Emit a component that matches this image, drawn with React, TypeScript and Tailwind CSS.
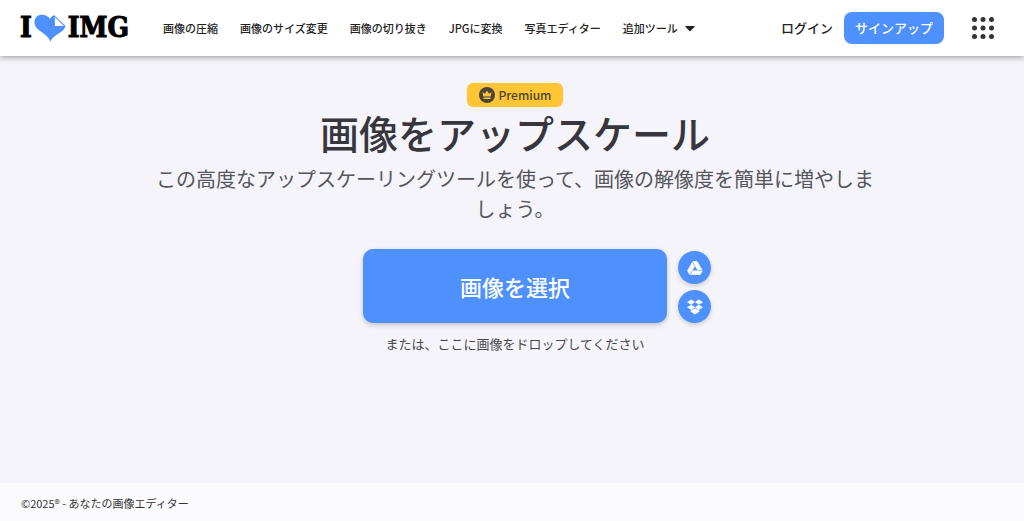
import { FaCaretDown } from "react-icons/fa";

type NavItem = {
  label: string;
  href: string;
};

const navItems: NavItem[] = [
  { label: "画像の圧縮", href: "#compress" },
  { label: "画像のサイズ変更", href: "#resize" },
  { label: "画像の切り抜き", href: "#crop" },
  { label: "JPGに変換", href: "#convert" },
  { label: "写真エディター", href: "#editor" },
];

const Logo = () => {
  return (
    <a
      href="#home"
      aria-label="I love IMG"
      className="flex items-center font-['DejaVu_Serif_Condensed','DejaVu_Serif',serif] text-[28px] leading-8 font-bold text-black [-webkit-text-stroke:1px_black]"
    >
      <span>I</span>
      <svg viewBox="0 0 32 28" className="mx-0.5 h-7 w-8" aria-hidden="true">
        <path
          d="M16.500 27.500C15 23.500 11 20.500 6 17C1.500 13.800 .3 10.500 .5 7.500C.8 3.500 4 .8 8 .8C11.500 .8 14.500 2.500 16 5C17 3 18.500 1.500 20 1.200L31.500 12C30.500 16.500 26 18.500 22.500 21C19.500 23 17.500 25 16.500 27.500Z"
          fill="#4d90fe"
        />
        <path d="M20.300 2L31 12.500H20.300Z" fill="#fff" stroke="#4d90fe" strokeWidth="1" strokeLinejoin="round" />
      </svg>
      <span>IMG</span>
    </a>
  );
};

const Header = () => {
  return (
    <header className="relative flex h-14 items-center bg-white pr-[30px] pl-5 shadow-[0_1px_6px_rgba(0,0,0,0.4)]">
      <Logo />
      <nav className="ml-[34px] flex items-center gap-[22px] text-[11px] font-medium whitespace-nowrap text-[#222]">
        {navItems.map((item) => (
          <a key={item.href} href={item.href} className="hover:text-[#4d90fe]">
            {item.label}
          </a>
        ))}
        <button className="flex items-center gap-1 hover:text-[#4d90fe]">
          追加ツール
          <FaCaretDown className="size-4" />
        </button>
      </nav>
      <div className="ml-auto flex items-center text-[13px] font-medium whitespace-nowrap">
        <a href="#login" className="text-[#222]">
          ログイン
        </a>
        <a
          href="#signup"
          className="ml-[11px] flex h-8 items-center rounded-lg bg-[#4d90fe] px-[11px] text-white"
        >
          サインアップ
        </a>
        <button aria-label="メニュー" className="ml-7">
          <svg viewBox="0 0 22 22" className="size-[22px]" fill="#333338">
            {[2.5, 11, 19.5].map((y) =>
              [2.5, 11, 19.5].map((x) => <circle key={`${x}-${y}`} cx={x} cy={y} r="2.500" />)
            )}
          </svg>
        </button>
      </div>
    </header>
  );
};

const PremiumBadge = () => {
  return (
    <div className="flex h-6 items-center gap-1 rounded-md bg-[#ffc532] px-3 text-[12px] font-medium text-[#4a4637]">
      <svg viewBox="0 0 16 16" className="size-4" aria-hidden="true">
        <circle cx="8" cy="8" r="8" fill="#48443a" />
        <path d="M3.500 5L6 6.800L8 3.500L10 6.800L12.500 5L11.700 9.500H4.300Z" fill="#ffc532" />
        <path d="M4.500 10.500H11.500V12H4.500Z" fill="#ffc532" />
      </svg>
      Premium
    </div>
  );
};

const DriveIcon = () => {
  return (
    <svg viewBox="0 0 16 16" className="size-4" aria-hidden="true">
      <path
        d="M6 1.500H10L15.300 10.700L13.300 14.300H2.700L.7 10.700Z"
        fill="#fff"
        stroke="#fff"
        strokeWidth="1"
        strokeLinejoin="round"
      />
      <path d="M8 6L10.500 10.400H5.500Z" fill="#4d90fe" />
      <path
        d="M8 6L5.500 1.500M10.500 10.400H16M5.500 10.400L3 15"
        fill="none"
        stroke="#4d90fe"
        strokeWidth=".6"
      />
    </svg>
  );
};

const DropboxIcon = () => {
  return (
    <svg viewBox="0 0 16 16" className="size-4" fill="#fff" aria-hidden="true">
      <path d="M4.300 .5L8 3L4.300 5.700L0 3.200Z" />
      <path d="M11.700 .5L16 3.200L11.700 5.700L8 3Z" />
      <path d="M4.300 5.700L8 8.300L4.300 11L0 8.300Z" />
      <path d="M11.700 5.700L16 8.300L11.700 11L8 8.300Z" />
      <path d="M8 9.200L12.500 11.800V12.500L8 15.500L3.500 12.500V11.800Z" />
    </svg>
  );
};

const Uploader = () => {
  const circle =
    "flex size-[33px] items-center justify-center rounded-full bg-[#4d90fe] shadow-[0_2px_4px_rgba(0,0,0,0.16)]";

  return (
    <div className="mt-[25px] grid w-full grid-cols-[1fr_auto_1fr] gap-x-[11px]">
      <button className="col-start-2 h-[74px] w-[304px] rounded-[10px] bg-[#4d90fe] text-[22px] font-medium text-white shadow-[0_2px_5px_rgba(0,0,0,0.2)]">
        画像を選択
      </button>
      <div className="flex flex-col justify-end gap-1.5">
        <button aria-label="Google ドライブから選択" className={circle}>
          <DriveIcon />
        </button>
        <button aria-label="Dropbox から選択" className={circle}>
          <DropboxIcon />
        </button>
      </div>
    </div>
  );
};

const App = () => {
  return (
    <div
      lang="ja"
      className="flex min-h-screen flex-col bg-[#f4f4fa] font-['Noto_Sans_CJK_JP',sans-serif]"
    >
      <Header />
      <main className="flex flex-1 flex-col items-center pt-[27px] pl-1.5">
        <PremiumBadge />
        <h1 className="text-[39px] leading-[50px] font-medium text-[#36363c]">画像をアップスケール</h1>
        <p className="mt-[7px] max-w-[730px] text-center text-[20px] leading-[30px] text-[#55555b]">
          この高度なアップスケーリングツールを使って、画像の解像度を簡単に増やしましょう。
        </p>
        <Uploader />
        <p className="mt-[11px] text-[13px] leading-5 text-[#48484e]">
          または、ここに画像をドロップしてください
        </p>
      </main>
      <footer className="flex h-[38px] items-center bg-[#fbfbfd] px-[21px] pt-0.5 text-[11px] text-[#333338]">
        ©2025® - あなたの画像エディター
      </footer>
    </div>
  );
};

export default App;
